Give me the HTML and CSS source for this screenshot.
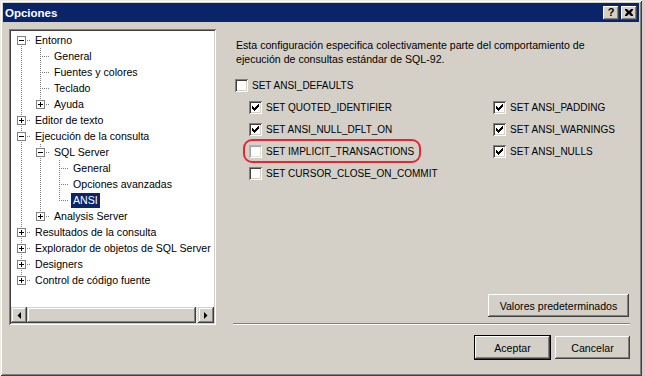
FILE: index.html
```html
<!DOCTYPE html>
<html lang="es">
<head>
<meta charset="utf-8">
<title>Opciones</title>
<link rel="stylesheet" href="styles.css">
</head>
<body>
<div class="window">
  <div class="titlebar">
    <span class="title">Opciones</span>
    <div class="tbtns">
      <span class="tbtn help">?</span>
      <span class="tbtn close"><svg width="8" height="7" viewBox="0 0 8 7"><path d="M0 0h2l2 2 2-2h2v1l-2 2.5 2 2.5v1h-2l-2-2-2 2h-2v-1l2-2.5-2-2.5z" fill="#000"/></svg></span>
    </div>
  </div>
  <div class="content">
    <div class="main">
      <div class="tree">
        <div class="rows">
          <div class="row"><i class="c f"><svg class="ex" width="9" height="9"><rect x=".5" y=".5" width="8" height="8" fill="#fff" stroke="#808080"/><path d="M2 4.5h5" stroke="#000"/></svg></i><span class="lbl">Entorno</span></div>
          <div class="row"><i class="c v"></i><i class="c t"></i><span class="lbl">General</span></div>
          <div class="row"><i class="c v"></i><i class="c t"></i><span class="lbl">Fuentes y colores</span></div>
          <div class="row"><i class="c v"></i><i class="c t"></i><span class="lbl">Teclado</span></div>
          <div class="row"><i class="c v"></i><i class="c l"><svg class="ex" width="9" height="9"><rect x=".5" y=".5" width="8" height="8" fill="#fff" stroke="#808080"/><path d="M2 4.5h5M4.5 2v5" stroke="#000"/></svg></i><span class="lbl">Ayuda</span></div>
          <div class="row"><i class="c t"><svg class="ex" width="9" height="9"><rect x=".5" y=".5" width="8" height="8" fill="#fff" stroke="#808080"/><path d="M2 4.5h5M4.5 2v5" stroke="#000"/></svg></i><span class="lbl">Editor de texto</span></div>
          <div class="row"><i class="c t"><svg class="ex" width="9" height="9"><rect x=".5" y=".5" width="8" height="8" fill="#fff" stroke="#808080"/><path d="M2 4.5h5" stroke="#000"/></svg></i><span class="lbl">Ejecución de la consulta</span></div>
          <div class="row"><i class="c v"></i><i class="c t"><svg class="ex" width="9" height="9"><rect x=".5" y=".5" width="8" height="8" fill="#fff" stroke="#808080"/><path d="M2 4.5h5" stroke="#000"/></svg></i><span class="lbl">SQL Server</span></div>
          <div class="row"><i class="c v"></i><i class="c v"></i><i class="c t"></i><span class="lbl">General</span></div>
          <div class="row"><i class="c v"></i><i class="c v"></i><i class="c t"></i><span class="lbl">Opciones avanzadas</span></div>
          <div class="row"><i class="c v"></i><i class="c v"></i><i class="c l"></i><span class="lbl sel">ANSI</span></div>
          <div class="row"><i class="c v"></i><i class="c l"><svg class="ex" width="9" height="9"><rect x=".5" y=".5" width="8" height="8" fill="#fff" stroke="#808080"/><path d="M2 4.5h5M4.5 2v5" stroke="#000"/></svg></i><span class="lbl">Analysis Server</span></div>
          <div class="row"><i class="c t"><svg class="ex" width="9" height="9"><rect x=".5" y=".5" width="8" height="8" fill="#fff" stroke="#808080"/><path d="M2 4.5h5M4.5 2v5" stroke="#000"/></svg></i><span class="lbl">Resultados de la consulta</span></div>
          <div class="row"><i class="c t"><svg class="ex" width="9" height="9"><rect x=".5" y=".5" width="8" height="8" fill="#fff" stroke="#808080"/><path d="M2 4.5h5M4.5 2v5" stroke="#000"/></svg></i><span class="lbl">Explorador de objetos de SQL Server</span></div>
          <div class="row"><i class="c t"><svg class="ex" width="9" height="9"><rect x=".5" y=".5" width="8" height="8" fill="#fff" stroke="#808080"/><path d="M2 4.5h5M4.5 2v5" stroke="#000"/></svg></i><span class="lbl">Designers</span></div>
          <div class="row"><i class="c l"><svg class="ex" width="9" height="9"><rect x=".5" y=".5" width="8" height="8" fill="#fff" stroke="#808080"/><path d="M2 4.5h5M4.5 2v5" stroke="#000"/></svg></i><span class="lbl">Control de código fuente</span></div>
        </div>
        <div class="hscroll">
          <span class="arrow"><svg width="4" height="7" viewBox="0 0 4 7"><path d="M4 0v7L0.5 3.5z" fill="#000"/></svg></span>
          <span class="track"><span class="thumb"></span></span>
          <span class="arrow"><svg width="4" height="7" viewBox="0 0 4 7"><path d="M0 0v7l3.5-3.5z" fill="#000"/></svg></span>
        </div>
      </div>
      <div class="panel">
        <p class="desc">Esta configuración especifica colectivamente parte del comportamiento de ejecución de consultas estándar de SQL-92.</p>
        <div class="checks">
          <label class="chk span"><span class="cb"></span><span class="ctext">SET ANSI_DEFAULTS</span></label>
          <label class="chk ind"><span class="cb"><svg width="13" height="13"><path d="M3 5h1v3h-1zM4 6h1v3h-1zM5 7h1v3h-1zM6 6h1v3h-1zM7 5h1v3h-1zM8 4h1v3h-1zM9 3h1v3h-1z" fill="#000"/></svg></span><span class="ctext">SET QUOTED_IDENTIFIER</span></label>
          <label class="chk"><span class="cb"><svg width="13" height="13"><path d="M3 5h1v3h-1zM4 6h1v3h-1zM5 7h1v3h-1zM6 6h1v3h-1zM7 5h1v3h-1zM8 4h1v3h-1zM9 3h1v3h-1z" fill="#000"/></svg></span><span class="ctext">SET ANSI_PADDING</span></label>
          <label class="chk ind"><span class="cb"><svg width="13" height="13"><path d="M3 5h1v3h-1zM4 6h1v3h-1zM5 7h1v3h-1zM6 6h1v3h-1zM7 5h1v3h-1zM8 4h1v3h-1zM9 3h1v3h-1z" fill="#000"/></svg></span><span class="ctext">SET ANSI_NULL_DFLT_ON</span></label>
          <label class="chk"><span class="cb"><svg width="13" height="13"><path d="M3 5h1v3h-1zM4 6h1v3h-1zM5 7h1v3h-1zM6 6h1v3h-1zM7 5h1v3h-1zM8 4h1v3h-1zM9 3h1v3h-1z" fill="#000"/></svg></span><span class="ctext">SET ANSI_WARNINGS</span></label>
          <label class="chk ind"><span class="mark"><span class="cb faint"></span><span class="ctext">SET IMPLICIT_TRANSACTIONS</span></span></label>
          <label class="chk"><span class="cb"><svg width="13" height="13"><path d="M3 5h1v3h-1zM4 6h1v3h-1zM5 7h1v3h-1zM6 6h1v3h-1zM7 5h1v3h-1zM8 4h1v3h-1zM9 3h1v3h-1z" fill="#000"/></svg></span><span class="ctext">SET ANSI_NULLS</span></label>
          <label class="chk ind span"><span class="cb"></span><span class="ctext">SET CURSOR_CLOSE_ON_COMMIT</span></label>
        </div>
        <div class="defaults"><span class="btn wide">Valores predeterminados</span></div>
        <div class="sep"></div>
      </div>
    </div>
    <div class="actions">
      <span class="btn default">Aceptar</span>
      <span class="btn">Cancelar</span>
    </div>
  </div>
</div>
</body>
</html>
```

FILE: styles.css
```css
* { box-sizing: border-box; }
html, body { margin: 0; padding: 0; }
body {
  width: 645px;
  height: 376px;
  overflow: hidden;
  background: #d4d0c8;
  font-family: "Liberation Sans", Arial, sans-serif;
  font-size: 10.6px;
  color: #000;
}

.window {
  width: 642px;
  height: 376px;
  padding: 3px 3px 3px 3px;
  display: flex;
  flex-direction: column;
  background: #d4d0c8;
  box-shadow: inset 1px 1px #ecebe6, inset -1px -1px #404040, inset 2px 2px #fff, inset -2px -2px #808080;
}

.titlebar {
  height: 19px;
  flex: none;
  background: #0a246a;
  display: flex;
  align-items: center;
  justify-content: space-between;
  padding: 0 2px 0 2px;
}
.title {
  color: #fff;
  font-weight: bold;
  font-size: 11.5px;
  padding-left: 0;
}
.tbtns { display: flex; gap: 2px; }
.tbtn {
  width: 16px;
  height: 14px;
  background: #d4d0c8;
  box-shadow: inset -1px -1px #404040, inset 1px 1px #fff, inset -2px -2px #808080, inset 2px 2px #d4d0c8;
  display: flex;
  align-items: center;
  justify-content: center;
  font-weight: bold;
  font-size: 11px;
  line-height: 14px;
  padding-bottom: 1px;
}

.content {
  flex: 1;
  display: flex;
  flex-direction: column;
  padding: 7px 9px 0 6px;
}
.main {
  display: flex;
  height: 296px;
}

/* tree */
.tree {
  width: 207px;
  height: 296px;
  flex: none;
  background: #fff;
  padding: 2px;
  display: flex;
  flex-direction: column;
  box-shadow: inset 1px 1px #808080, inset -1px -1px #fff, inset 2px 2px #404040, inset -2px -2px #d4d0c8;
}
.rows {
  flex: 1;
  overflow: hidden;
  padding: 1px 0 0 1px;
}
.row {
  display: flex;
  height: 16px;
  align-items: flex-start;
  white-space: nowrap;
}
.c {
  width: 19px;
  height: 16px;
  flex: none;
  display: flex;
  justify-content: center;
  align-items: flex-start;
  background-repeat: no-repeat;
}
.ex { margin-top: 4px; display: block; }
.v {
  background-image: repeating-linear-gradient(to bottom, #808080 0 1px, transparent 1px 2px);
  background-position: 9px 0;
  background-size: 1px 16px;
}
.t {
  background-image: repeating-linear-gradient(to bottom, #808080 0 1px, transparent 1px 2px), repeating-linear-gradient(to right, #808080 0 1px, transparent 1px 2px);
  background-position: 9px 0, 9px 8px;
  background-size: 1px 16px, 10px 1px;
}
.l {
  background-image: repeating-linear-gradient(to bottom, #808080 0 1px, transparent 1px 2px), repeating-linear-gradient(to right, #808080 0 1px, transparent 1px 2px);
  background-position: 9px 0, 9px 8px;
  background-size: 1px 9px, 10px 1px;
}
.f {
  background-image: repeating-linear-gradient(to bottom, #808080 0 1px, transparent 1px 2px), repeating-linear-gradient(to right, #808080 0 1px, transparent 1px 2px);
  background-position: 9px 8px, 9px 8px;
  background-size: 1px 8px, 10px 1px;
}
.lbl {
  margin-left: 2px;
  padding: 0 2px;
  height: 16px;
  line-height: 16px;
}
.lbl.sel {
  background: #0a246a;
  color: #fff;
  height: 15px;
  line-height: 15px;
  margin-top: 1px;
}

.hscroll {
  height: 16px;
  flex: none;
  display: flex;
}
.arrow {
  width: 16px;
  height: 16px;
  flex: none;
  background: #d4d0c8;
  box-shadow: inset -1px -1px #404040, inset 1px 1px #d4d0c8, inset -2px -2px #808080, inset 2px 2px #fff;
  display: flex;
  align-items: center;
  justify-content: center;
}
.arrow svg { display: block; }
.track {
  flex: 1;
  display: flex;
  background-color: #fff;
  background-image: repeating-conic-gradient(#d4d0c8 0 25%, #fff 0 50%);
  background-size: 2px 2px;
}
.thumb {
  width: calc(100% - 2px);
  height: 16px;
  background: #d4d0c8;
  box-shadow: inset -1px -1px #404040, inset 1px 1px #d4d0c8, inset -2px -2px #808080, inset 2px 2px #fff;
}

/* right panel */
.panel {
  flex: 1;
  margin-left: 18px;
  display: flex;
  flex-direction: column;
  padding-top: 9px;
}
.desc {
  margin: 0;
  width: 380px;
  line-height: 14px;
  padding-left: 2px;
}
.checks {
  margin-top: 13px;
  display: grid;
  grid-template-columns: 258px auto;
  row-gap: 9px;
  padding-left: 1px;
}
.chk {
  display: flex;
  align-items: center;
  height: 13px;
}
.chk.span { grid-column: 1 / span 2; }
.chk.ind { padding-left: 14px; }
.cb {
  width: 13px;
  height: 13px;
  flex: none;
  background: #fff;
  box-shadow: inset 1px 1px #808080, inset -1px -1px #fff, inset 2px 2px #404040, inset -2px -2px #d4d0c8;
}
.cb svg { display: block; }
.cb.faint {
  box-shadow: inset 1px 1px #b8b6b0, inset -1px -1px #fff, inset 2px 2px #a0a0a0, inset -2px -2px #e4e2dc;
}
.ctext {
  margin-left: 4px;
  font-size: 10px;
  white-space: nowrap;
}
.mark {
  position: relative;
  display: flex;
  align-items: center;
}
.mark::after {
  content: "";
  position: absolute;
  left: -6px;
  right: -7px;
  top: -6px;
  bottom: -5px;
  border: 2px solid #dd2a35;
  border-radius: 9px;
}

.defaults {
  margin-top: auto;
  display: flex;
  justify-content: flex-end;
  padding-right: 1px;
}
.sep {
  margin-top: 6px;
  margin-left: -1px;
  height: 2px;
  border-top: 1px solid #808080;
  border-bottom: 1px solid #fff;
}

.btn {
  height: 23px;
  width: 75px;
  display: flex;
  align-items: center;
  justify-content: center;
  background: #d4d0c8;
  box-shadow: inset -1px -1px #404040, inset 1px 1px #fff, inset -2px -2px #808080, inset 2px 2px #d4d0c8;
  white-space: nowrap;
}
.btn.wide { width: 141px; }
.btn.default {
  width: 77px;
  height: 25px;
  border: 1px solid #000;
}
.actions {
  display: flex;
  justify-content: flex-end;
  align-items: center;
  gap: 4px;
  margin-top: 10px;
}
```
